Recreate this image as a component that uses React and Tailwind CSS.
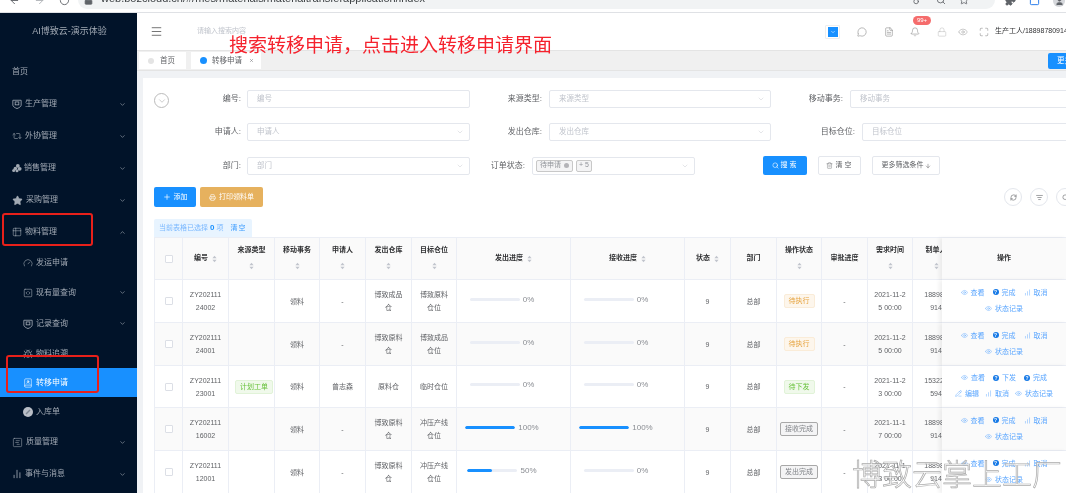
import {
  ArrowLeft, ArrowRight, RotateCw, Lock, Search, Star, Puzzle, User, Key,
  Menu, MessageCircle, FileText, Bell, Eye, Maximize, ChevronDown, ChevronUp, X,
  Repeat2, Table2, Gauge, SquareCode, Bug, BookUser, SquareChartGantt, ChartNoAxesColumn,
  Plus, Printer, Trash2, ArrowDown, RefreshCw, ListFilter, PencilLine, ChartNoAxesColumnIncreasing, PanelTop,
} from 'lucide-react';

const font = "font-['Liberation_Sans','Noto_Sans_CJK_SC',sans-serif]";

// shield with a small box inside, used by 生产管理 and 记录查询
const ShieldBox = ({ size = 10 }) => (
  <svg viewBox="0 0 12 12" width={size} height={size} fill="none" stroke="currentColor" strokeWidth="1">
    <path d="M1 1.5h10v6c0 1.5-2.5 3-5 4-2.500-1-5-2.500-5-4z" />
    <rect x="3.800" y="3.500" width="4.400" height="3.500" />
  </svg>
);

const CoinPile = ({ size = 12 }) => (
  <svg viewBox="0 0 12 10" width={size} height={size} fill="currentColor">
    <circle cx="7" cy="2.500" r="2.300" />
    <circle cx="4" cy="5.500" r="2.100" />
    <circle cx="9.200" cy="6" r="2.300" />
    <circle cx="2" cy="8" r="1.800" />
    <circle cx="6" cy="8.200" r="1.800" />
  </svg>
);

const GrayDisc = ({ size = 10 }) => (
  <svg viewBox="0 0 10 10" width={size} height={size}>
    <circle cx="5" cy="5" r="5" fill="#b9bec6" />
    <path d="M3 7 7 3" stroke="#7d8590" strokeWidth="1.400" />
  </svg>
);

const menuTop = [
  { label: '生产管理', Icon: ShieldBox },
  { label: '外协管理', Icon: Repeat2 },
  { label: '销售管理', Icon: CoinPile, textCls: 'ml-[2px]' },
  { label: '采购管理', Icon: Star, fill: true, size: 11 },
];

const menuSub = [
  { label: '发运申请', Icon: Gauge, h: 'h-[29px]' },
  { label: '现有量查询', Icon: SquareCode, h: 'h-[31px]', arrow: true },
  { label: '记录查询', Icon: ShieldBox, h: 'h-[31px]', arrow: true },
  { label: '物料追溯', Icon: Bug, h: 'h-[29px]' },
  { label: '转移申请', Icon: BookUser, h: 'h-[29px]', active: true },
  { label: '入库单', Icon: GrayDisc, h: 'h-[29px]' },
];

const rows = [
  { no: 'ZY202111\n24002', from: '博致成品\n仓', to: '博致原料\n仓位', send: 0, recv: 0, state: 'wait', time: '2021-11-2\n5 00:00', user: '188987\n914', h: 'h-[43px]' },
  { no: 'ZY202111\n24001', from: '博致原料\n仓', to: '博致成品\n仓位', send: 0, recv: 0, state: 'wait', time: '2021-11-2\n5 00:00', user: '188987\n914', striped: true, h: 'h-[43px]' },
  { no: 'ZY202111\n23001', source: true, applicant: '曾志森', from: '原料仓', to: '临时仓位', send: 0, recv: 0, state: 'issue', time: '2021-11-2\n3 00:00', user: '153223\n594', full: true, h: 'h-[42px]' },
  { no: 'ZY202111\n16002', from: '博致原料\n仓', to: '冲压产线\n仓位', send: 100, recv: 100, state: 'recv', time: '2021-11-1\n7 00:00', user: '188987\n914', striped: true, h: 'h-[43px]' },
  { no: 'ZY202111\n12001', from: '博致原料\n仓', to: '冲压产线\n仓位', send: 50, recv: 0, state: 'sent', time: '2021-11-1\n3 00:00', user: '188987\n914', h: 'h-[43px]' },
];

const stateTags = {
  wait: { text: '待执行', cls: 'bg-[#fdf6ec] border-[#faecd8] text-[#e6a23c] w-[31px]' },
  issue: { text: '待下发', cls: 'bg-[#f0f9eb] border-[#e1f3d8] text-[#67c23a] w-[31px]' },
  recv: { text: '接收完成', cls: 'bg-[#f4f4f5] border-[#a8a8a8] text-[#808388] w-[38px]' },
  sent: { text: '发出完成', cls: 'bg-[#f4f4f5] border-[#a8a8a8] text-[#808388] w-[38px]' },
};

const Sort = () => (
  <svg viewBox="0 0 6 9" className="w-[5px] h-[8px] fill-[#c0c4cc] shrink-0">
    <path d="M3 0.5 5.500 3.500H.5Z" />
    <path d="M3 8.500 .5 5.500h5Z" />
  </svg>
);

const Th = ({ children, sort, stack, raw, className = '' }) => (
  <th className={`h-[42px] bg-[#fafafa] border-r border-b border-[#ebeef5] p-0 font-semibold text-[#303133] overflow-hidden ${className}`}>
    {raw ? children : sort && stack ? (
      <div className="flex flex-col items-center gap-[6px] pb-[2px]">
        <span>{children}</span>
        <Sort />
      </div>
    ) : (
      <div className="flex items-center justify-center gap-[4px]">
        <span>{children}</span>
        {sort && <Sort />}
      </div>
    )}
  </th>
);

const Td = ({ children, striped, h, className = '' }) => (
  <td className={`${h} border-r border-b border-[#ebeef5] p-0 text-center text-[#606266] whitespace-pre-line leading-[13px] overflow-hidden ${striped ? 'bg-[#fafafa]' : 'bg-white'} ${className}`}>
    {children}
  </td>
);

const Progress = ({ value }) => (
  <div className="flex items-center justify-center gap-[3px] pr-[23px] pb-[4px]">
    <div className="w-[50px] h-[3px] rounded-full bg-[#ebeef5] overflow-hidden">
      {value === 100 && <div className="w-full h-full bg-[#1890ff] rounded-full" />}
      {value === 50 && <div className="w-1/2 h-full bg-[#1890ff] rounded-full" />}
    </div>
    <span className="text-[8px] text-[#8a8d93]">{value}%</span>
  </div>
);

const Action = ({ Icon, solid, children }) => (
  <span className="inline-flex items-center gap-[3px] text-[#5aa6ff]">
    {Icon ? (
      <Icon size={7} strokeWidth={1.5} />
    ) : (
      <span className={`w-[6px] h-[6px] rounded-full text-white text-[5px] leading-[6px] text-center font-bold ${solid}`}>?</span>
    )}
    {children}
  </span>
);

const Ops = ({ full }) => (
  <div className="flex flex-col gap-[3px] items-center leading-[13px] pb-[2px]">
    {full ? (
      <>
        <div className="flex gap-[8px]">
          <Action Icon={Eye}>查看</Action>
          <Action solid="bg-[#1478e6]">下发</Action>
          <Action solid="bg-[#1478e6]">完成</Action>
        </div>
        <div className="flex gap-[6px]">
          <Action Icon={PencilLine}>编辑</Action>
          <Action Icon={ChartNoAxesColumnIncreasing}>取消</Action>
          <Action Icon={Eye}>状态记录</Action>
        </div>
      </>
    ) : (
      <>
        <div className="flex gap-[8px]">
          <Action Icon={Eye}>查看</Action>
          <Action solid="bg-[#1478e6]">完成</Action>
          <Action Icon={ChartNoAxesColumnIncreasing}>取消</Action>
        </div>
        <Action Icon={Eye}>状态记录</Action>
      </>
    )}
  </div>
);

const Field = ({ label, labelW, inputW, placeholder, arrow = true, gap = 'ml-[7px]', children }) => (
  <div className="flex items-center text-[7.5px]">
    <label className={`text-right text-[8px] text-[#606266] ${labelW}`}>{label}:</label>
    <div className={`h-[18px] flex items-center justify-between border border-[#e4e7ed] rounded-[2px] bg-white px-[9px] shrink-0 ${gap} ${inputW}`}>
      {children || <span className="text-[#c0c4cc]">{placeholder}</span>}
      {arrow && <ChevronDown size={8} strokeWidth={1} className="text-[#b0b4bc] -mr-[4px]" />}
    </div>
  </div>
);

const Sidebar = () => (
  <aside className="w-[137px] shrink-0 h-full bg-[#011329] text-[#a2aab4] text-[8px]">
    <div className="h-[37px] flex items-center justify-center text-[9px] pl-[2px]">AI博致云-演示体验</div>
    <nav className="pt-[6px]">
      <div className="h-[32px] flex items-center pl-[12px]">首页</div>
      {menuTop.map(({ label, Icon, fill, size, textCls }) => (
        <div key={label} className="h-[32px] flex items-center pl-[12px] pr-[11px]">
          <Icon size={size || 10} strokeWidth={1.4} className={fill ? 'fill-current' : ''} />
          <span className={textCls || 'ml-[3px]'}>{label}</span>
          <ChevronDown size={7} className="ml-auto" />
        </div>
      ))}
      <div className="h-[32px] flex items-center pl-[12px] pr-[11px]">
        <Table2 size={10} strokeWidth={1.4} />
        <span className="ml-[3px]">物料管理</span>
        <ChevronUp size={7} className="ml-auto" />
      </div>
      {menuSub.map(({ label, Icon, h, arrow, active }) => (
        <div key={label} className={`${h} flex items-center pl-[23px] pr-[11px] ${active ? 'bg-[#1890ff] text-white' : ''}`}>
          <Icon size={10} strokeWidth={1.4} />
          <span className="ml-[3px]">{label}</span>
          {arrow && <ChevronDown size={7} className="ml-auto" />}
        </div>
      ))}
      <div className="h-[32px] flex items-center pl-[12px] pr-[11px]">
        <SquareChartGantt size={11} strokeWidth={1.2} />
        <span className="ml-[3px]">质量管理</span>
        <ChevronDown size={7} className="ml-auto" />
      </div>
      <div className="h-[32px] flex items-center pl-[12px] pr-[11px]">
        <ChartNoAxesColumn size={10} strokeWidth={2} />
        <span className="ml-[3px]">事件与消息</span>
        <ChevronDown size={7} className="ml-auto" />
      </div>
    </nav>
  </aside>
);

const BrowserBar = () => (
  <div className="h-[13px] shrink-0 bg-white border-b border-[#dfe1e5] flex overflow-hidden text-[#5f6368]">
    <div className="flex items-start gap-[14px] pl-[9px] w-[78px] -mt-[5px]">
      <ArrowLeft size={11} />
      <ArrowRight size={11} className="text-[#b0b3b8]" />
      <RotateCw size={11} />
    </div>
    <div className="w-[917px] h-[9px] rounded-b-[9px] bg-[#f1f3f4] flex justify-between pl-[6px] pr-[26px] overflow-hidden">
      <div className="flex items-start -mt-[5px]">
        <Lock size={9} className="fill-current mt-[1px]" />
        <span className="ml-[8px] -mt-[4px] text-[11px] leading-[14px] text-[#3c4043] whitespace-nowrap">web.bozcloud.cn/#/mes/materials/materialtransferapplication/index</span>
      </div>
      <div className="flex items-start gap-[13px] -mt-[5px]">
        <Key size={10} />
        <Search size={10} />
        <Star size={10} />
      </div>
    </div>
    <div className="flex items-start gap-[13px] pl-[10px] -mt-[5px]">
      <Puzzle size={11} className="fill-current" />
      <PanelTop size={11} className="text-[#1a73e8]" />
      <div className="w-[12px] h-[12px] rounded-full bg-[#d6d8dc] flex items-center justify-center">
        <User size={9} className="fill-current" />
      </div>
    </div>
  </div>
);

const Header = () => (
  <header className="h-[37px] shrink-0 bg-white flex items-center text-[7px]">
    <Menu size={13} strokeWidth={1.4} className="ml-[13px] text-[#4a4a4a]" />
    <span className="ml-[34px] text-[#c0c4cc]">请输入搜索内容</span>
    <div className="ml-auto flex items-center text-[#777]">
      <div className="w-[15px] h-[14px] border border-[#eee] rounded-[1px] flex items-center justify-center">
        <div className="w-[10px] h-[10px] bg-[#1890ff] flex items-center justify-center">
          <ChevronDown size={6} className="text-white" />
        </div>
      </div>
      <MessageCircle size={10} strokeWidth={1.2} className="ml-[17px]" />
      <FileText size={10} strokeWidth={1.2} className="ml-[17px]" />
      <div className="relative ml-[16px]">
        <Bell size={10} strokeWidth={1.2} />
        <span className="absolute -top-[11px] left-[3px] w-[18px] h-[9px] rounded-full bg-[#f56c6c] text-white text-[6px] leading-[9px] text-center">99+</span>
      </div>
      <Lock size={10} strokeWidth={1.2} className="ml-[17px] text-[#bbb]" />
      <Eye size={10} strokeWidth={1.2} className="ml-[11px] text-[#999]" />
      <Maximize size={10} strokeWidth={1.2} className="ml-[11px]" />
      <span className="ml-[6px] w-[71px] overflow-hidden whitespace-nowrap text-[#303133]">生产工人/18898780914</span>
    </div>
  </header>
);

const Tabs = () => (
  <div className="h-[21px] shrink-0 bg-[#f0f0f0] border-t border-b border-[#e4e4e4] flex items-center pl-[2px] text-[7.5px] text-[#606266]">
    <div className="w-[47px] h-[17px] bg-white flex items-center pl-[9px]">
      <span className="w-[6px] h-[6px] rounded-full bg-[#e4e4e4]" />
      <span className="ml-[6px]">首页</span>
    </div>
    <div className="ml-[5px] w-[70px] h-[17px] bg-white flex items-center pl-[9px]">
      <span className="w-[7px] h-[7px] rounded-full bg-[#1890ff]" />
      <span className="ml-[5px]">转移申请</span>
      <X size={5} className="ml-[7px]" />
    </div>
    <button className="ml-auto w-[18px] h-[16px] bg-[#1890ff] text-white rounded-l-[2px] pl-[9px] whitespace-nowrap overflow-hidden text-left">更多</button>
  </div>
);

const FilterForm = () => (
  <div className="flex pt-[12px] pl-[11px] overflow-hidden">
    <div className="w-[15px] h-[15px] mt-[3px] rounded-full border border-[#bbb] flex items-center justify-center shrink-0">
      <ChevronDown size={10} strokeWidth={1} className="text-[#888]" />
    </div>
    <div className="flex flex-col gap-[15px] shrink-0">
      <div className="flex">
        <Field label="编号" labelW="w-[72px]" inputW="w-[223px]" placeholder="编号" arrow={false} gap="ml-[6px]" />
        <Field label="来源类型" labelW="w-[72px]" inputW="w-[222px]" placeholder="来源类型" />
        <Field label="移动事务" labelW="w-[72px]" inputW="w-[230px]" placeholder="移动事务" />
      </div>
      <div className="flex">
        <Field label="申请人" labelW="w-[72px]" inputW="w-[223px]" placeholder="申请人" gap="ml-[6px]" />
        <Field label="发出仓库" labelW="w-[72px]" inputW="w-[222px]" placeholder="发出仓库" />
        <Field label="目标仓位" labelW="w-[84px]" inputW="w-[230px]" placeholder="目标仓位" />
      </div>
      <div className="flex items-center">
        <Field label="部门" labelW="w-[72px]" inputW="w-[223px]" placeholder="部门" gap="ml-[6px]" />
        <Field label="订单状态" labelW="w-[55px]" inputW="w-[163px]">
          <div className="flex items-center gap-[3px] -ml-[6px] text-[7px] text-[#909399]">
            <span className="h-[12px] px-[3px] flex items-center gap-[3px] bg-[#f4f4f5] border border-[#c8c8c8] rounded-[2px]">
              待申请
              <span className="w-[5px] h-[5px] rounded-full bg-[#b4b4b8]" />
            </span>
            <span className="h-[12px] px-[2px] flex items-center bg-[#f4f4f5] border border-[#c8c8c8] rounded-[2px]">+ 5</span>
          </div>
        </Field>
        <button className="ml-[68px] w-[44px] h-[19px] bg-[#1890ff] rounded-[2px] text-white text-[7px] tracking-[2px] flex items-center justify-center gap-[2px]">
          <Search size={7} />搜索
        </button>
        <button className="ml-[11px] w-[43px] h-[19px] bg-white border border-[#e4e7ed] rounded-[2px] text-[#606266] text-[7px] tracking-[2px] flex items-center justify-center gap-[3px]">
          <Trash2 size={7} strokeWidth={1.3} />清空
        </button>
        <button className="ml-[11px] w-[68px] h-[19px] bg-white border border-[#e4e7ed] rounded-[2px] text-[#606266] text-[7px] flex items-center justify-center gap-[1px]">
          更多筛选条件<ArrowDown size={6} />
        </button>
      </div>
    </div>
  </div>
);

const Toolbar = () => (
  <div className="flex items-center mt-[12px] pl-[11px] pr-0 text-[7px] text-white">
    <button className="w-[42px] h-[20px] bg-[#1890ff] rounded-[2px] flex items-center justify-center gap-[3px]">
      <Plus size={8} />添加
    </button>
    <button className="ml-[4px] w-[63px] h-[20px] bg-[#e6b15e] rounded-[2px] flex items-center justify-center gap-[3px]">
      <Printer size={7} />打印领料单
    </button>
    <div className="ml-auto flex gap-[8px] -mr-[8px] shrink-0 text-[#606266]">
      <span className="w-[18px] h-[18px] rounded-full border border-[#e4e7ed] flex items-center justify-center"><RefreshCw size={7} /></span>
      <span className="w-[18px] h-[18px] rounded-full border border-[#e4e7ed] flex items-center justify-center"><ListFilter size={7} /></span>
      <span className="w-[18px] h-[18px] rounded-full border border-[#e4e7ed] flex items-center justify-center"><Search size={7} /></span>
    </div>
  </div>
);

const DataTable = () => (
  <table className="w-[912px] ml-[11px] table-fixed border-separate border-spacing-0 border-t border-l border-[#ebeef5] text-[7px]">
    <colgroup>
      <col className="w-[28px]" />
      <col className="w-[46px]" />
      <col className="w-[46px]" />
      <col className="w-[45px]" />
      <col className="w-[46px]" />
      <col className="w-[46px]" />
      <col className="w-[45px]" />
      <col className="w-[114px]" />
      <col className="w-[114px]" />
      <col className="w-[46px]" />
      <col className="w-[46px]" />
      <col className="w-[45px]" />
      <col className="w-[46px]" />
      <col className="w-[45px]" />
      <col className="w-[29px]" />
      <col className="w-[125px]" />
    </colgroup>
    <thead>
      <tr>
        <Th><span className="block w-[8px] h-[8px] mx-auto border border-[#dcdfe6] rounded-[1px] bg-white" /></Th>
        <Th sort>编号</Th>
        <Th sort stack>来源类型</Th>
        <Th sort stack>移动事务</Th>
        <Th sort stack>申请人</Th>
        <Th sort stack>发出仓库</Th>
        <Th sort stack>目标仓位</Th>
        <Th sort>发出进度</Th>
        <Th sort>接收进度</Th>
        <Th sort>状态</Th>
        <Th>部门</Th>
        <Th sort stack>操作状态</Th>
        <Th>审批进度</Th>
        <Th sort stack>需求时间</Th>
        <Th raw className="border-r-0">
          <div className="w-[46px] flex flex-col items-center gap-[6px] pb-[2px]">
            <span className="whitespace-nowrap">制单人</span>
            <Sort />
          </div>
        </Th>
        <Th className="shadow-[-3px_0_4px_rgba(0,0,0,0.06)]">操作</Th>
      </tr>
    </thead>
    <tbody>
      {rows.map((row) => {
        const tag = stateTags[row.state];
        const cell = { striped: row.striped, h: row.h };
        return (
          <tr key={row.no}>
            <Td {...cell}><span className="block w-[8px] h-[8px] mx-auto border border-[#dcdfe6] rounded-[1px] bg-white" /></Td>
            <Td {...cell}>{row.no}</Td>
            <Td {...cell}>
              {row.source && (
                <div className="flex items-center pl-[6px] gap-[1px]">
                  <span className="w-[38px] h-[14px] leading-[12px] rounded-[2px] bg-[#f0f9eb] border border-[#e1f3d8] text-[#67c23a] shrink-0">计划工单</span>
                  <span>.</span>
                </div>
              )}
            </Td>
            <Td {...cell}>领料</Td>
            <Td {...cell}>{row.applicant || '-'}</Td>
            <Td {...cell}>{row.from}</Td>
            <Td {...cell}>{row.to}</Td>
            <Td {...cell}><Progress value={row.send} /></Td>
            <Td {...cell}><Progress value={row.recv} /></Td>
            <Td {...cell}>9</Td>
            <Td {...cell}>总部</Td>
            <Td {...cell}>
              <div className="flex justify-center">
                <span className={`h-[14px] leading-[12px] border rounded-[2px] ${tag.cls}`}>{tag.text}</span>
              </div>
            </Td>
            <Td {...cell}>-</Td>
            <Td {...cell}>{row.time}</Td>
            <Td {...cell} className="border-r-0"><div className="w-[46px] text-center">{row.user}</div></Td>
            <Td {...cell} className="shadow-[-3px_0_4px_rgba(0,0,0,0.06)]"><Ops full={row.full} /></Td>
          </tr>
        );
      })}
    </tbody>
  </table>
);

export default function App() {
  return (
    <div className={`relative w-[1066px] h-[493px] overflow-hidden bg-white flex flex-col blur-[0.35px] ${font}`}>
      <BrowserBar />
      <div className="flex flex-1 min-h-0">
        <Sidebar />
        <main className="flex-1 min-w-0 flex flex-col bg-[#f0f2f5]">
          <Header />
          <Tabs />
          <section className="ml-[6px] mt-[7px] flex-1 min-h-0 bg-white overflow-hidden">
            <FilterForm />
            <Toolbar />
            <div className="ml-[11px] mt-[12px] w-[98px] h-[18px] bg-[#e8f4ff] rounded-t-[2px] flex items-center pl-[5px] text-[7px] text-[#7ab8ff] whitespace-nowrap">
              当前表格已选择 <b className="mx-[2px] text-[#1890ff] text-[8px]">0</b> 项
              <span className="ml-[7px] tracking-[1px] text-[#409eff]">清空</span>
            </div>
            <DataTable />
          </section>
        </main>
      </div>

      <div className="absolute left-[229px] top-[34px] text-[19px] leading-[24px] text-[#f5222d] whitespace-nowrap">搜索转移申请，点击进入转移申请界面</div>
      <div className="absolute left-[2px] top-[213px] w-[91px] h-[33px] border-2 border-[#e8201a] rounded-[3px]" />
      <div className="absolute left-[6px] top-[355px] w-[93px] h-[38px] border-2 border-[#e8201a] rounded-[3px]" />
      <div className="absolute left-[852px] top-[458px] text-[30px] leading-[34px] font-light text-white/70 [-webkit-text-stroke:0.7px_#aaa] whitespace-nowrap">博致云掌上工厂</div>
    </div>
  );
}
